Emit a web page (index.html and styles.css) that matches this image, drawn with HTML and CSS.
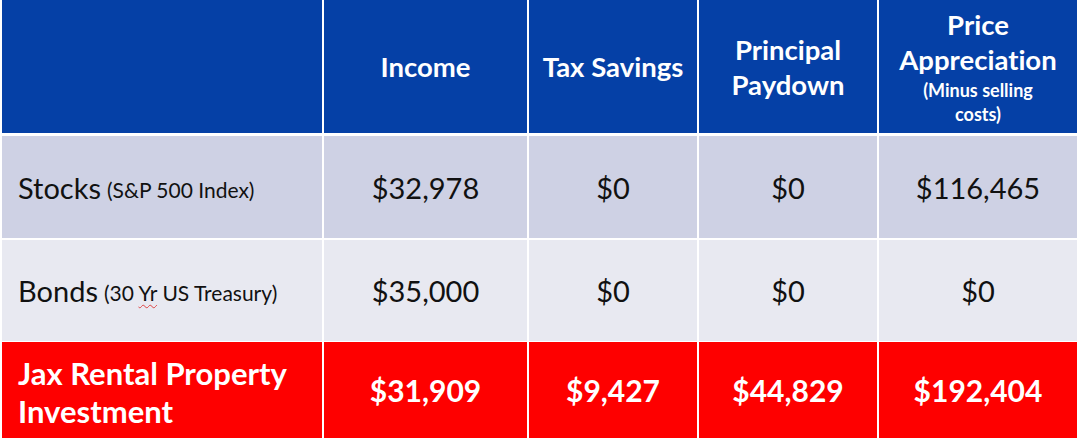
FILE: index.html
```html
<!DOCTYPE html>
<html>
<head>
<meta charset="utf-8">
<link rel="stylesheet" href="styles.css">
</head>
<body>
<div class="table">
  <div class="row head">
    <div class="cell label"></div>
    <div class="cell"><span>Income</span></div>
    <div class="cell"><span>Tax Savings</span></div>
    <div class="cell"><span>Principal<br>Paydown</span></div>
    <div class="cell"><span>Price<br>Appreciation<small>(Minus selling<br>costs)</small></span></div>
  </div>
  <div class="row stocks">
    <div class="cell label">Stocks <small>(S&amp;P 500 Index)</small></div>
    <div class="cell">$32,978</div>
    <div class="cell">$0</div>
    <div class="cell">$0</div>
    <div class="cell">$116,465</div>
  </div>
  <div class="row bonds">
    <div class="cell label">Bonds <small>(30 <span class="typo">Yr</span> US Treasury)</small></div>
    <div class="cell">$35,000</div>
    <div class="cell">$0</div>
    <div class="cell">$0</div>
    <div class="cell">$0</div>
  </div>
  <div class="row jax">
    <div class="cell label">Jax Rental Property<br>Investment</div>
    <div class="cell">$31,909</div>
    <div class="cell">$9,427</div>
    <div class="cell">$44,829</div>
    <div class="cell">$192,404</div>
  </div>
</div>
</body>
</html>
```

FILE: styles.css
```css
html, body {
  margin: 0;
  padding: 0;
  background: #ffffff;
}
body {
  width: 1077px;
  height: 438px;
  overflow: hidden;
  font-family: Lato, "Open Sans", sans-serif;
  font-variant-ligatures: none;
  font-feature-settings: "liga" 0, "clig" 0, "dlig" 0;
}
.table {
  display: flex;
  flex-direction: column;
  padding-left: 2px;
}
.row {
  display: grid;
  grid-template-columns: 320px 203px 168px 178px 1fr;
  column-gap: 2px;
}
.cell {
  display: flex;
  align-items: center;
  justify-content: center;
  text-align: center;
}
.cell.label {
  justify-content: flex-start;
  text-align: left;
  padding-left: 16px;
}
.head {
  height: 133px;
  margin-bottom: 3px;
}
.head .cell {
  background: #0540a6;
  color: #ffffff;
  font-weight: 700;
  font-size: 27.5px;
  line-height: 35px;
}
.head .cell small {
  display: block;
  font-size: 18px;
  line-height: 24px;
  margin-top: 1px;
}
.stocks, .bonds {
  font-size: 29px;
  color: #111111;
}
.stocks {
  height: 102px;
  margin-bottom: 2px;
}
.stocks .cell {
  background: #ced1e4;
}
.bonds {
  height: 101px;
  margin-bottom: 1px;
}
.bonds .cell {
  background: #e8e9f1;
}
.stocks .label small, .bonds .label small {
  font-size: 21px;
  margin-left: 6px;
  position: relative;
  top: 2px;
}
.typo {
  text-decoration: underline wavy #d44;
  text-decoration-thickness: 1px;
  text-underline-offset: 3px;
}
.jax {
  height: 96px;
}
.jax .cell {
  background: #fe0000;
  color: #ffffff;
  font-weight: 700;
  font-size: 30px;
}
.jax .label {
  font-size: 31px;
  line-height: 38px;
  padding-top: 4px;
}
```
